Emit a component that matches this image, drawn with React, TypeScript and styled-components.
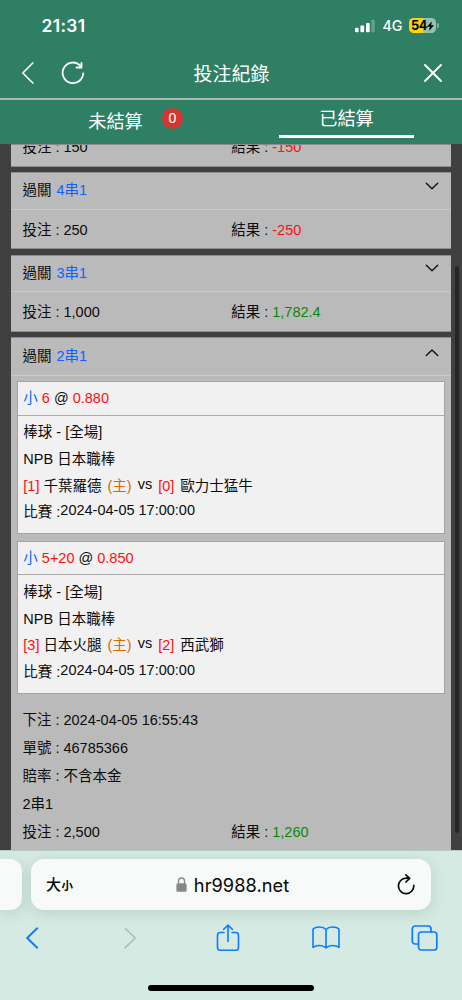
import React from "react";
import styled, { createGlobalStyle } from "styled-components";

const Global = createGlobalStyle`
  body { margin: 0; background: #404040; }
  *, *::before, *::after { box-sizing: border-box; }
`;

const Screen = styled.div`
  width: 462px;
  height: 1000px;
  display: flex;
  flex-direction: column;
  overflow: hidden;
  background: #404040;
  color: #0c0c0c;
  font-family: "Liberation Sans", "Noto Sans CJK TC", sans-serif;
  font-size: 14.5px;
  svg { display: block; flex: none; }
`;

const Header = styled.header`
  flex: none;
  height: 144px;
  background: #2f7f64;
  color: #fff;
`;

const StatusBar = styled.div`
  height: 50px;
  display: flex;
  align-items: center;
  justify-content: space-between;
  padding: 1px 23.5px 0 41.5px;
  font-family: Inter, sans-serif;
`;

const Clock = styled.span`
  font-size: 17.4px;
  font-weight: 600;
  letter-spacing: 0.35px;
`;

const StatusRight = styled.div`
  display: flex;
  align-items: center;
`;

const Network = styled.span`
  font-size: 14.3px;
  font-weight: 500;
  margin: 0 6.5px 0 7px;
`;

const Battery = styled.div`
  width: 27px;
  height: 15px;
  border-radius: 4.5px;
  background: linear-gradient(90deg, #fdd30b 0 14.5px, #98c0b2 14.5px);
  color: #000;
  display: flex;
  align-items: center;
  justify-content: center;
  font-size: 12.8px;
  font-weight: 700;
  letter-spacing: -0.3px;
`;

const BatteryTip = styled.i`
  width: 1.5px;
  height: 5px;
  margin-left: 1px;
  border-radius: 0 2px 2px 0;
  background: #82b2a2;
`;

const TitleBar = styled.div`
  height: 50px;
  display: grid;
  grid-template-columns: 1fr auto 1fr;
  align-items: center;
  padding: 0 19px 3px 20px;
  border-bottom: 2px solid #acb8b3;
`;

const Title = styled.h1`
  margin: 4px 0 0;
  font-size: 19px;
  line-height: 26px;
  font-weight: 400;
`;

const NavIcons = styled.div`
  display: flex;
  align-items: center;
  gap: 26px;
  margin-left: 1px;
`;

const CloseSlot = styled.div`
  display: flex;
  justify-content: flex-end;
`;

const Tabs = styled.nav`
  height: 44px;
  display: grid;
  grid-template-columns: 1fr 1fr;
  font-size: 18.2px;
`;

const Tab = styled.div`
  position: relative;
  display: flex;
  justify-content: center;
`;

const TabLabel = styled.span<{ $active?: boolean }>`
  width: ${(p) => (p.$active ? "134.5px" : "auto")};
  height: 38px;
  line-height: ${(p) => (p.$active ? "39px" : "45px")};
  text-align: center;
  border-bottom: ${(p) => (p.$active ? "3.5px solid #fff" : "none")};
`;

const Badge = styled.span`
  position: absolute;
  top: 8px;
  left: 162px;
  width: 21px;
  height: 21px;
  border-radius: 50%;
  background: #d43732;
  font-size: 14px;
  line-height: 21px;
  text-align: center;
`;

const Content = styled.main`
  position: relative;
  flex: none;
  height: 706px;
  overflow: hidden;
  display: flex;
  flex-direction: column;
  gap: 5.5px;
  padding: 0 11px;
`;

const Card = styled.section<{ $height: number; $open?: boolean }>`
  flex: none;
  height: ${(p) => p.$height}px;
  display: flex;
  flex-direction: column;
  justify-content: ${(p) => (p.$open ? "flex-start" : "flex-end")};
  overflow: hidden;
  background: #bababa;
  border: solid #8c8c8c;
  border-width: 1px 0;
`;

const CardHead = styled.div`
  flex: none;
  height: 37.3px;
  display: flex;
  justify-content: space-between;
  padding: 0 12.2px 0 11.4px;
  line-height: 36px;
  border-bottom: 1px solid #cbcbcb;
  svg { margin-top: 8.5px; }
`;

const Kind = styled.span`
  margin-left: 1px;
  color: #0e62ff;
`;

const Totals = styled.div<{ $height?: number }>`
  flex: none;
  height: ${(p) => p.$height ?? 38.5}px;
  display: grid;
  grid-template-columns: 208.8px 1fr;
  padding: ${(p) => (p.$height ? 0 : "1px")} 11.4px 0;
  line-height: ${(p) => p.$height ?? 39.5}px;
`;

const Tone = styled.span<{ $c: string }>`
  color: ${(p) => p.$c};
`;

const BetList = styled.div`
  flex: none;
  display: flex;
  flex-direction: column;
  gap: 6.4px;
  padding: 5.5px 6px 0;
`;

const Bet = styled.article`
  height: 153.4px;
  background: #f1f1f1;
  border: 1px solid #a3a3a3;
`;

const BetHead = styled.div`
  height: 33.5px;
  padding: 0 5.3px;
  line-height: 33px;
  border-bottom: 1px solid #ababab;
`;

const BetBody = styled.div`
  padding: 3.5px 5.3px 0;
`;

const Line = styled.div`
  height: 26.8px;
  line-height: 27px;
  display: flex;
  white-space: pre;
`;

const Host = styled.span`
  color: #d96a00;
  margin: 0 6px;
`;

const Raised = styled.span<{ $gap?: number }>`
  line-height: 23px;
  margin-right: ${(p) => p.$gap ?? 0}px;
`;

const Away = styled.span`
  margin-left: 6px;
`;

const Details = styled.div`
  flex: none;
  padding: 11.5px 11.4px 0;
  line-height: 28px;
`;

const ScrollThumb = styled.div`
  position: absolute;
  right: 3px;
  top: 122px;
  width: 4px;
  height: 567px;
  border-radius: 2px;
  background: #262626;
`;

const Browser = styled.footer`
  flex: none;
  height: 150px;
  display: flex;
  flex-direction: column;
  align-items: center;
  background: #d5eae2;
  border-top: 1px solid #b5cbc3;
  overflow: hidden;
`;

const AddressRow = styled.div`
  width: 462px;
  display: flex;
  gap: 9px;
  padding-top: 8px;
`;

const PrevTab = styled.div`
  width: 22px;
  height: 51px;
  background: #f7faf9;
  border-radius: 0 12px 12px 0;
  box-shadow: 0 3px 14px rgba(50, 100, 80, 0.17);
`;

const AddressBar = styled.div`
  width: 400px;
  height: 51px;
  display: grid;
  grid-template-columns: 72px 1fr 69px;
  align-items: center;
  padding: 0 15px;
  background: #f7faf9;
  border-radius: 13px;
  box-shadow: 0 3px 14px rgba(50, 100, 80, 0.17);
`;

const TextSize = styled.span`
  font-family: "Noto Sans CJK TC", sans-serif;
  font-weight: 500;
  font-size: 15px;
  line-height: 24px;
  small { font-size: 11.5px; font-weight: 700; margin-left: 0.5px; }
`;

const Address = styled.span`
  display: flex;
  align-items: center;
  justify-content: center;
  gap: 7px;
  font-family: Inter, sans-serif;
  font-size: 18.2px;
  letter-spacing: 0.05px;
  color: #080808;
`;

const ReloadSlot = styled.span`
  display: flex;
  justify-content: flex-end;
`;

const Toolbar = styled.div`
  width: 462px;
  height: 56px;
  display: flex;
  align-items: center;
  justify-content: space-between;
  padding: 0 24px 0 18px;
  color: #0b7cff;
`;

const Tool = styled.span<{ $off?: boolean }>`
  width: 28px;
  display: flex;
  justify-content: center;
  color: ${(p) => (p.$off ? "#b0bdb8" : "inherit")};
`;

const HomeIndicator = styled.div`
  width: 166px;
  height: 6px;
  margin-top: 19px;
  border-radius: 3px;
  background: #000;
`;

const BLUE = "#0e62ff";
const RED = "#ff1010";
const GREEN = "#078a07";

const line = { fill: "none", stroke: "currentColor", strokeLinecap: "round", strokeLinejoin: "round" } as const;

const Chevron = ({ up }: { up?: boolean }) => (
  <svg width="14" height="12" viewBox="0 0 14 12" {...line} strokeWidth="1.3">
    <path d={up ? "M1.3 8.5 7 3 12.7 8.5" : "M1.3 2.2 7 7.7 12.7 2.2"} />
  </svg>
);

const Sums = ({ stake, result, win, height }: { stake: string; result: string; win?: boolean; height?: number }) => (
  <Totals $height={height}>
    <span>投注 : {stake}</span>
    <span>結果 : <Tone $c={win ? GREEN : RED}>{result}</Tone></span>
  </Totals>
);

const Head = ({ kind, open }: { kind: string; open?: boolean }) => (
  <CardHead>
    <span>過關 <Kind>{kind}</Kind></span>
    <Chevron up={open} />
  </CardHead>
);

interface Game { pick: string; odds: string; homeScore: number; home: string; awayScore: number; away: string }

const games: Game[] = [
  { pick: "6", odds: "0.880", homeScore: 1, home: "千葉羅德", awayScore: 0, away: "歐力士猛牛" },
  { pick: "5+20", odds: "0.850", homeScore: 3, home: "日本火腿", awayScore: 2, away: "西武獅" },
];

const BetItem = ({ g }: { g: Game }) => (
  <Bet>
    <BetHead>
      <Tone $c={BLUE}>小</Tone> <Tone $c={RED}>{g.pick}</Tone> @ <Tone $c={RED}>{g.odds}</Tone>
    </BetHead>
    <BetBody>
      <Line>棒球 - [全場]</Line>
      <Line>NPB 日本職棒</Line>
      <Line>
        <Tone $c={RED}>[{g.homeScore}]</Tone>
        <span> {g.home}</span>
        <Host>(主)</Host>
        <Raised $gap={6}>vs</Raised>
        <Tone $c={RED}>[{g.awayScore}]</Tone>
        <Away>{g.away}</Away>
      </Line>
      <Line>
        <span>比賽 :</span>
        <Raised>2024-04-05 17:00:00</Raised>
      </Line>
    </BetBody>
  </Bet>
);

export default function App() {
  return (
    <Screen>
      <Global />
      <Header>
        <StatusBar>
          <Clock>21:31</Clock>
          <StatusRight>
            <svg width="20" height="14" viewBox="0 0 20 14" fill="#fff">
              <rect x="0" y="8.8" width="3.6" height="4.4" rx="1" />
              <rect x="5.4" y="6.6" width="3.7" height="6.6" rx="1" />
              <rect x="11" y="4" width="3.7" height="9.2" rx="1" />
              <rect x="16.3" y="0.6" width="3.5" height="12.6" rx="1" opacity="0.25" />
            </svg>
            <Network>4G</Network>
            <Battery>
              54
              <svg width="7" height="10" viewBox="0 0 7 10" fill="#000">
                <path d="M4.9 0.2 0 5.7H2.9L2 9.9 7 4.2H4.100Z" />
              </svg>
            </Battery>
            <BatteryTip />
          </StatusRight>
        </StatusBar>
        <TitleBar>
          <NavIcons>
            <svg width="14" height="24" viewBox="0 0 14 24" {...line} strokeWidth="1.7">
              <path d="M11.8 2 1.8 12 11.8 22" />
            </svg>
            <svg width="24" height="24" viewBox="0 0 24 24" {...line} strokeWidth="1.8">
              <path d="M22.2 12.5A10.3 10.3 0 1 1 18 3.500L20.200 6M20.500 1.800V6.500H15.500" />
            </svg>
          </NavIcons>
          <Title>投注紀錄</Title>
          <CloseSlot>
            <svg width="20" height="20" viewBox="0 0 20 20" {...line} strokeWidth="1.9">
              <path d="M2 2 18 18M18 2 2 18" />
            </svg>
          </CloseSlot>
        </TitleBar>
        <Tabs>
          <Tab>
            <TabLabel>未結算</TabLabel>
            <Badge>0</Badge>
          </Tab>
          <Tab>
            <TabLabel $active>已結算</TabLabel>
          </Tab>
        </Tabs>
      </Header>

      <Content>
        <Card $height={22.7}><Sums stake="150" result="-150" /></Card>
        <Card $height={77.1}>
          <Head kind="4串1" />
          <Sums stake="250" result="-250" />
        </Card>
        <Card $height={77}>
          <Head kind="3串1" />
          <Sums stake="1,000" result="1,782.4" win />
        </Card>
        <Card $height={520} $open>
          <Head kind="2串1" open />
          <BetList>
            {games.map((g) => <BetItem key={g.home} g={g} />)}
          </BetList>
          <Details>
            <div>下注 : 2024-04-05 16:55:43</div>
            <div>單號 : 46785366</div>
            <div>賠率 : 不含本金</div>
            <div>2串1</div>
          </Details>
          <Sums stake="2,500" result="1,260" win height={28} />
        </Card>
        <ScrollThumb />
      </Content>

      <Browser>
        <AddressRow>
          <PrevTab />
          <AddressBar>
            <TextSize>大<small>小</small></TextSize>
            <Address>
              <svg width="11" height="15" viewBox="0 0 11 15">
                <rect x="0.4" y="6.3" width="10.2" height="8.4" rx="1.5" fill="#858789" />
                <path d="M2.5 7V4a3 3 0 0 1 6 0v3" fill="none" stroke="#858789" strokeWidth="1.3" />
              </svg>
              hr9988.net
            </Address>
            <ReloadSlot>
              <svg width="19" height="22" viewBox="0 0 19 22" {...line} strokeWidth="1.7">
                <path d="M16.800 11.300A7.700 7.700 0 1 1 9.200 4.200H12.400M8.900 0.900 12.600 4.400 8.900 8" />
              </svg>
            </ReloadSlot>
          </AddressBar>
        </AddressRow>
        <Toolbar>
          <Tool>
            <svg width="14" height="22" viewBox="0 0 14 22" {...line} strokeWidth="1.9">
              <path d="M12.2 1.3 2.2 11 12.2 20.7" />
            </svg>
          </Tool>
          <Tool $off>
            <svg width="14" height="22" viewBox="0 0 14 22" {...line} strokeWidth="1.7">
              <path d="M2.2 1.3 12.2 11 2.2 20.7" />
            </svg>
          </Tool>
          <Tool>
            <svg width="24" height="28" viewBox="0 0 24 28" {...line} strokeWidth="1.6">
              <path d="M8 8.500H4.2A2.7 2.7 0 0 0 1.5 11.2V23.500A2.7 2.7 0 0 0 4.2 26.2H19.8A2.7 2.7 0 0 0 22.5 23.500V11.200A2.7 2.7 0 0 0 19.8 8.500H16M12 17.500V1M7.5 5.500 12 1 16.5 5.500" />
            </svg>
          </Tool>
          <Tool>
            <svg width="28" height="24" viewBox="0 0 28 24" {...line} strokeWidth="1.6">
              <path d="M14 3.500C11 .3 4.2 .3 1 3V21.400C4.5 19 10.5 18.800 14 21.800C17.5 18.800 23.5 19 27 21.400V3C23.8 .3 17 .3 14 3.500ZV21.400" />
            </svg>
          </Tool>
          <Tool>
            <svg width="27" height="26" viewBox="0 0 27 26" {...line} strokeWidth="1.7">
              <path d="M7 19H4A2.7 2.7 0 0 1 1.3 16.3V3.7A2.7 2.7 0 0 1 4 1H17.3A2.7 2.7 0 0 1 20 3.7V7" />
              <rect x="7.5" y="7" width="18.3" height="18" rx="2.7" />
            </svg>
          </Tool>
        </Toolbar>
        <HomeIndicator />
      </Browser>
    </Screen>
  );
}
